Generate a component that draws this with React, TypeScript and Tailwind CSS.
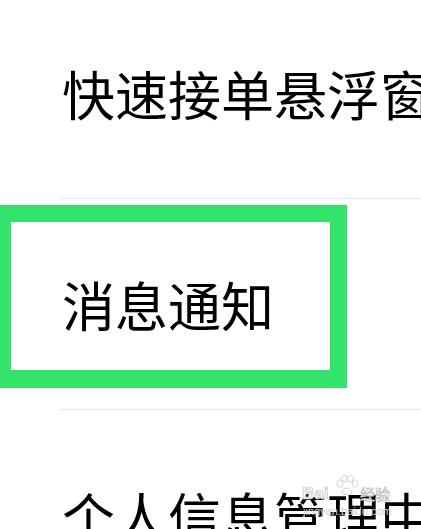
import React from "react";

const font = { fontFamily: '"Noto Sans CJK SC", "Noto Sans", sans-serif' };

function Row({ label }: { label: string }) {
  return (
    <div className="h-[210px] flex items-center pl-[62px] whitespace-nowrap overflow-hidden">
      <span className="text-[53px] leading-none text-black">{label}</span>
    </div>
  );
}

export default function App() {
  return (
    <div className="relative w-[421px] h-[529px] overflow-hidden bg-white" style={font}>
      <div className="-mt-[12px] flex flex-col">
        <Row label="快速接单悬浮窗" />
        <div className="ml-[60px] h-[1px] bg-[#e6e6e6]" />
        <Row label="消息通知" />
        <div className="ml-[60px] h-[1px] bg-[#e6e6e6]" />
        <Row label="个人信息管理中心" />
      </div>

      <div className="absolute left-0 top-[205px] w-[347px] h-[183px] border-[#33e36a] border-l-[11px] border-t-[17px] border-r-[17px] border-b-[18px]" />

      <div className="absolute left-[302px] top-[474px] w-[95px] h-[44px] pointer-events-none">
        <svg className="absolute left-[31px] top-[1px]" width="27" height="21" viewBox="0 0 26 22">
          <g fill="none" stroke="#cfcfcf" strokeWidth="1">
            <ellipse cx="6" cy="9" rx="3" ry="4" />
            <ellipse cx="11" cy="4" rx="3" ry="3.5" />
            <ellipse cx="17" cy="4" rx="3" ry="3.5" />
            <ellipse cx="22" cy="9" rx="3" ry="4" />
            <path d="M8 19 C8 12 18 12 19 19 C17 21 10 21 8 19 Z" />
          </g>
        </svg>
        <span
          className="absolute left-[0px] top-[11px] text-[17px] font-bold leading-none text-white"
          style={{ fontFamily: '"Liberation Sans", sans-serif', WebkitTextStroke: "0.7px #bdbdbd" }}
        >
          Bai
        </span>
        <span
          className="absolute left-[58px] top-[12px] text-[15px] leading-none text-white"
          style={{ WebkitTextStroke: "0.7px #bdbdbd" }}
        >
          经验
        </span>
        <span
          className="absolute left-[1px] top-[32px] text-[11px] leading-none text-[#d4d4d4]"
          style={{ fontFamily: '"Liberation Sans", sans-serif' }}
        >
          jingyan.baidu.com
        </span>
      </div>
    </div>
  );
}
